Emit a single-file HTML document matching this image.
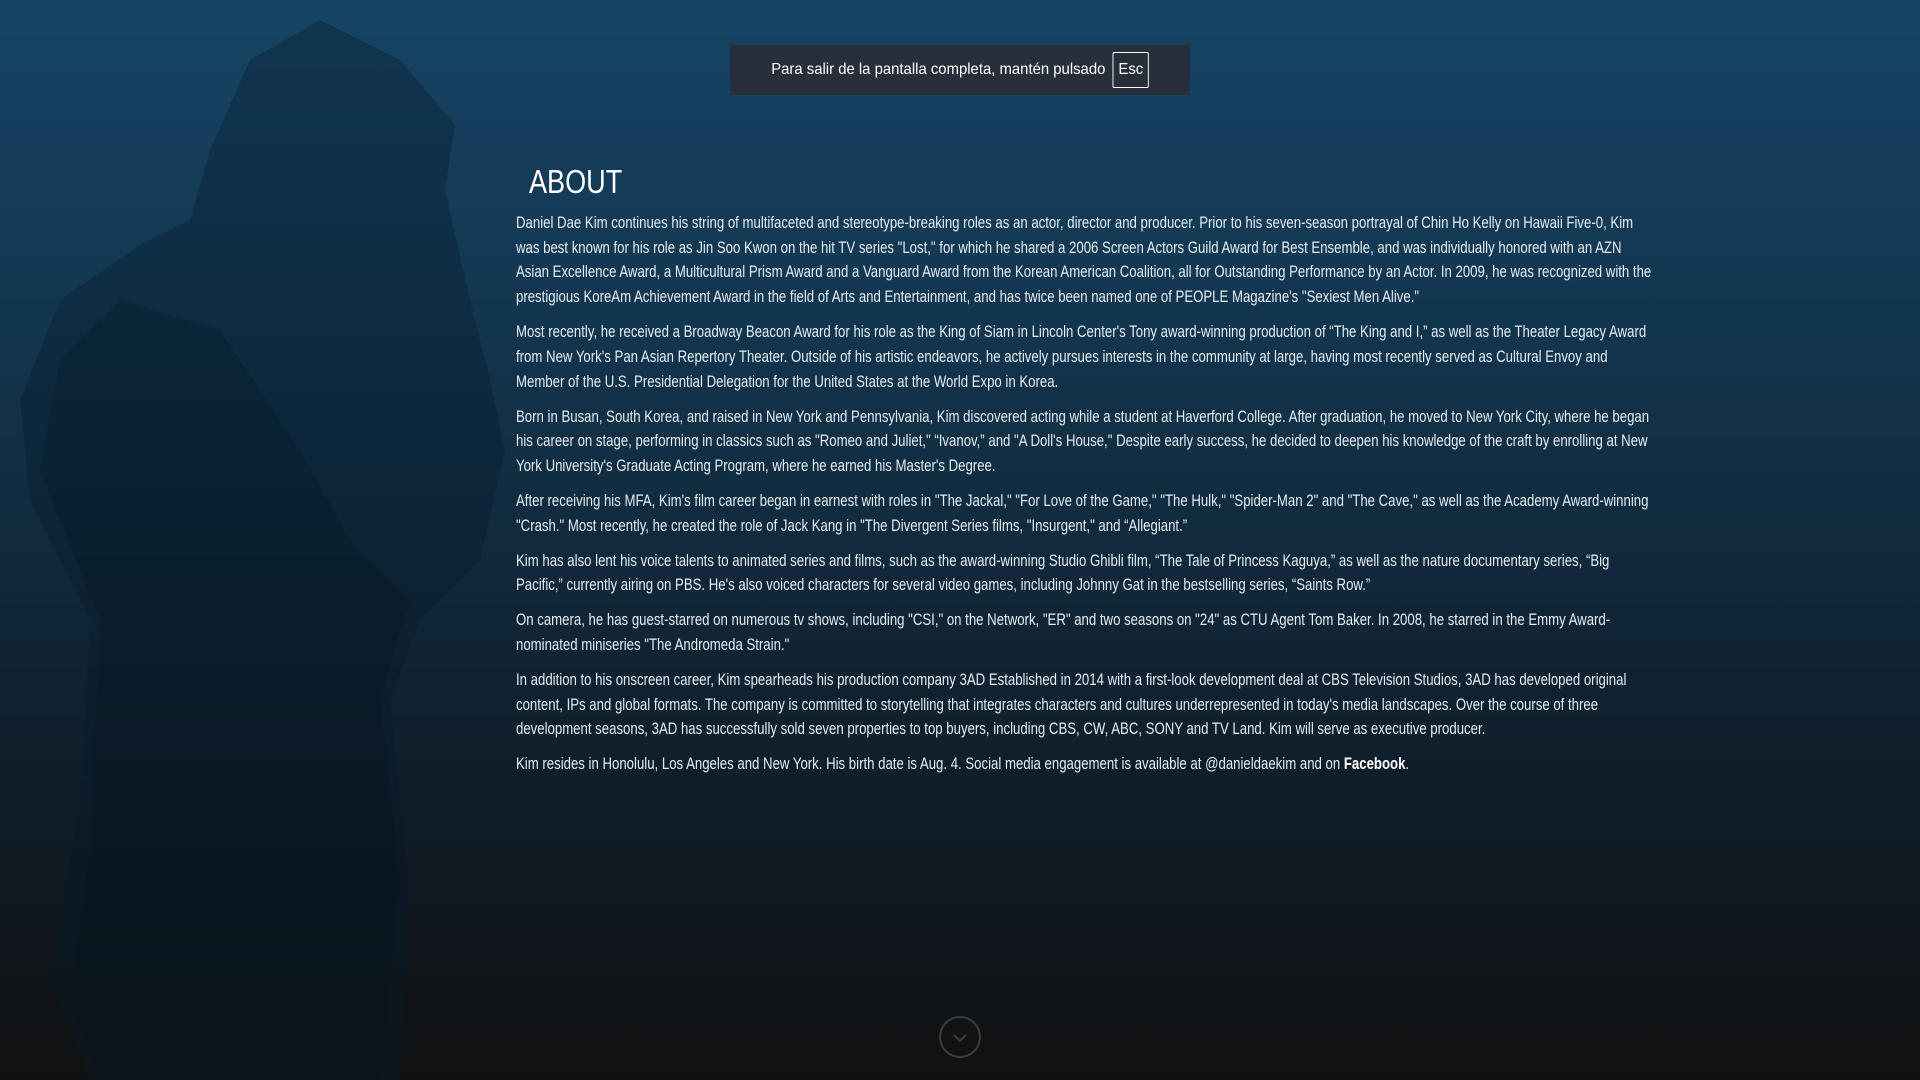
<!DOCTYPE html>
<html><head><meta charset="utf-8"><style>
html,body{margin:0;padding:0;width:1920px;height:1080px;overflow:hidden}
body{background:linear-gradient(180deg,#174465 0%,#133853 25%,#112a3d 50%,#0f1c27 75%,#111 100%);font-family:"Liberation Sans",sans-serif;position:relative;color:#e6edf2}
svg.fig{position:absolute;left:0;top:0}
.toast{position:absolute;left:730px;top:45px;width:460px;height:50px;background:#262f3a;color:#fff;font-size:16px;display:flex;align-items:center;justify-content:center}
.toast .in{transform:scaleX(0.93);white-space:nowrap;display:flex;align-items:center}
.toast span.k{border:1px solid #fff;border-radius:2px;padding:8px 5px;margin-left:8px}
h1{position:absolute;left:529px;top:163px;margin:0;font-size:33px;font-weight:normal;color:#fff;transform:scaleX(0.82);transform-origin:left}
.txt{position:absolute;left:516px;top:211px;width:1407px;font-size:16.3px;line-height:24.7px;transform:scaleX(0.81);transform-origin:left top}
.txt p{margin:0 0 10.3px}
.txt b{color:#fff}
.arr{position:absolute;left:939px;top:1016px;width:38px;height:38px;border:2px solid #3d3d3d;border-radius:50%}
</style></head><body>
<svg class="fig" width="560" height="1080"><g fill="#06192a" opacity="0.35">
<polygon points="140,245 60,300 20,400 30,500 90,620 80,800 50,980 90,1080 400,1080 410,900 390,700 420,620 480,560 505,450 490,380 470,300 445,190 455,125 400,60 320,20 250,60 210,150 190,220"/></g>
<g fill="#05121d" opacity="0.25"><polygon points="120,300 60,360 40,470 100,620 90,850 70,1000 100,1080 380,1080 400,880 380,700 410,600 350,540 300,450 220,330"/></g></svg>
<div class="toast"><div class="in">Para salir de la pantalla completa, mantén pulsado <span class="k">Esc</span></div></div>
<h1>ABOUT</h1>
<div class="txt">
<p>Daniel Dae Kim continues his string of multifaceted and stereotype-breaking roles as an actor, director and producer. Prior to his seven-season portrayal of Chin Ho Kelly on Hawaii Five-0, Kim was best known for his role as Jin Soo Kwon on the hit TV series "Lost," for which he shared a 2006 Screen Actors Guild Award for Best Ensemble, and was individually honored with an AZN Asian Excellence Award, a Multicultural Prism Award and a Vanguard Award from the Korean American Coalition, all for Outstanding Performance by an Actor. In 2009, he was recognized with the prestigious KoreAm Achievement Award in the field of Arts and Entertainment, and has twice been named one of PEOPLE Magazine's "Sexiest Men Alive."</p>
<p>Most recently, he received a Broadway Beacon Award for his role as the King of Siam in Lincoln Center's Tony award-winning production of “The King and I,” as well as the Theater Legacy Award from New York's Pan Asian Repertory Theater. Outside of his artistic endeavors, he actively pursues interests in the community at large, having most recently served as Cultural Envoy and Member of the U.S. Presidential Delegation for the United States at the World Expo in Korea.</p>
<p>Born in Busan, South Korea, and raised in New York and Pennsylvania, Kim discovered acting while a student at Haverford College. After graduation, he moved to New York City, where he began his career on stage, performing in classics such as "Romeo and Juliet," “Ivanov,” and "A Doll's House," Despite early success, he decided to deepen his knowledge of the craft by enrolling at New York University's Graduate Acting Program, where he earned his Master's Degree.</p>
<p>After receiving his MFA, Kim's film career began in earnest with roles in "The Jackal," "For Love of the Game," "The Hulk," "Spider-Man 2" and "The Cave," as well as the Academy Award-winning "Crash." Most recently, he created the role of Jack Kang in "The Divergent Series films, "Insurgent," and “Allegiant.”</p>
<p>Kim has also lent his voice talents to animated series and films, such as the award-winning Studio Ghibli film, “The Tale of Princess Kaguya,” as well as the nature documentary series, “Big Pacific,” currently airing on PBS. He's also voiced characters for several video games, including Johnny Gat in the bestselling series, “Saints Row.”</p>
<p>On camera, he has guest-starred on numerous tv shows, including "CSI," on the Network, "ER" and two seasons on "24" as CTU Agent Tom Baker. In 2008, he starred in the Emmy Award-nominated miniseries "The Andromeda Strain."</p>
<p>In addition to his onscreen career, Kim spearheads his production company 3AD Established in 2014 with a first-look development deal at CBS Television Studios, 3AD has developed original content, IPs and global formats. The company is committed to storytelling that integrates characters and cultures underrepresented in today's media landscapes. Over the course of three development seasons, 3AD has successfully sold seven properties to top buyers, including CBS, CW, ABC, SONY and TV Land. Kim will serve as executive producer.</p>
<p>Kim resides in Honolulu, Los Angeles and New York. His birth date is Aug. 4. Social media engagement is available at @danieldaekim and on <b>Facebook</b>.</p>
</div>
<div class="arr"><svg width="38" height="38" viewBox="0 0 38 38"><path d="M13 17 L19 23 L25 17" fill="none" stroke="#3d3d3d" stroke-width="2"/></svg></div>
</body></html>
